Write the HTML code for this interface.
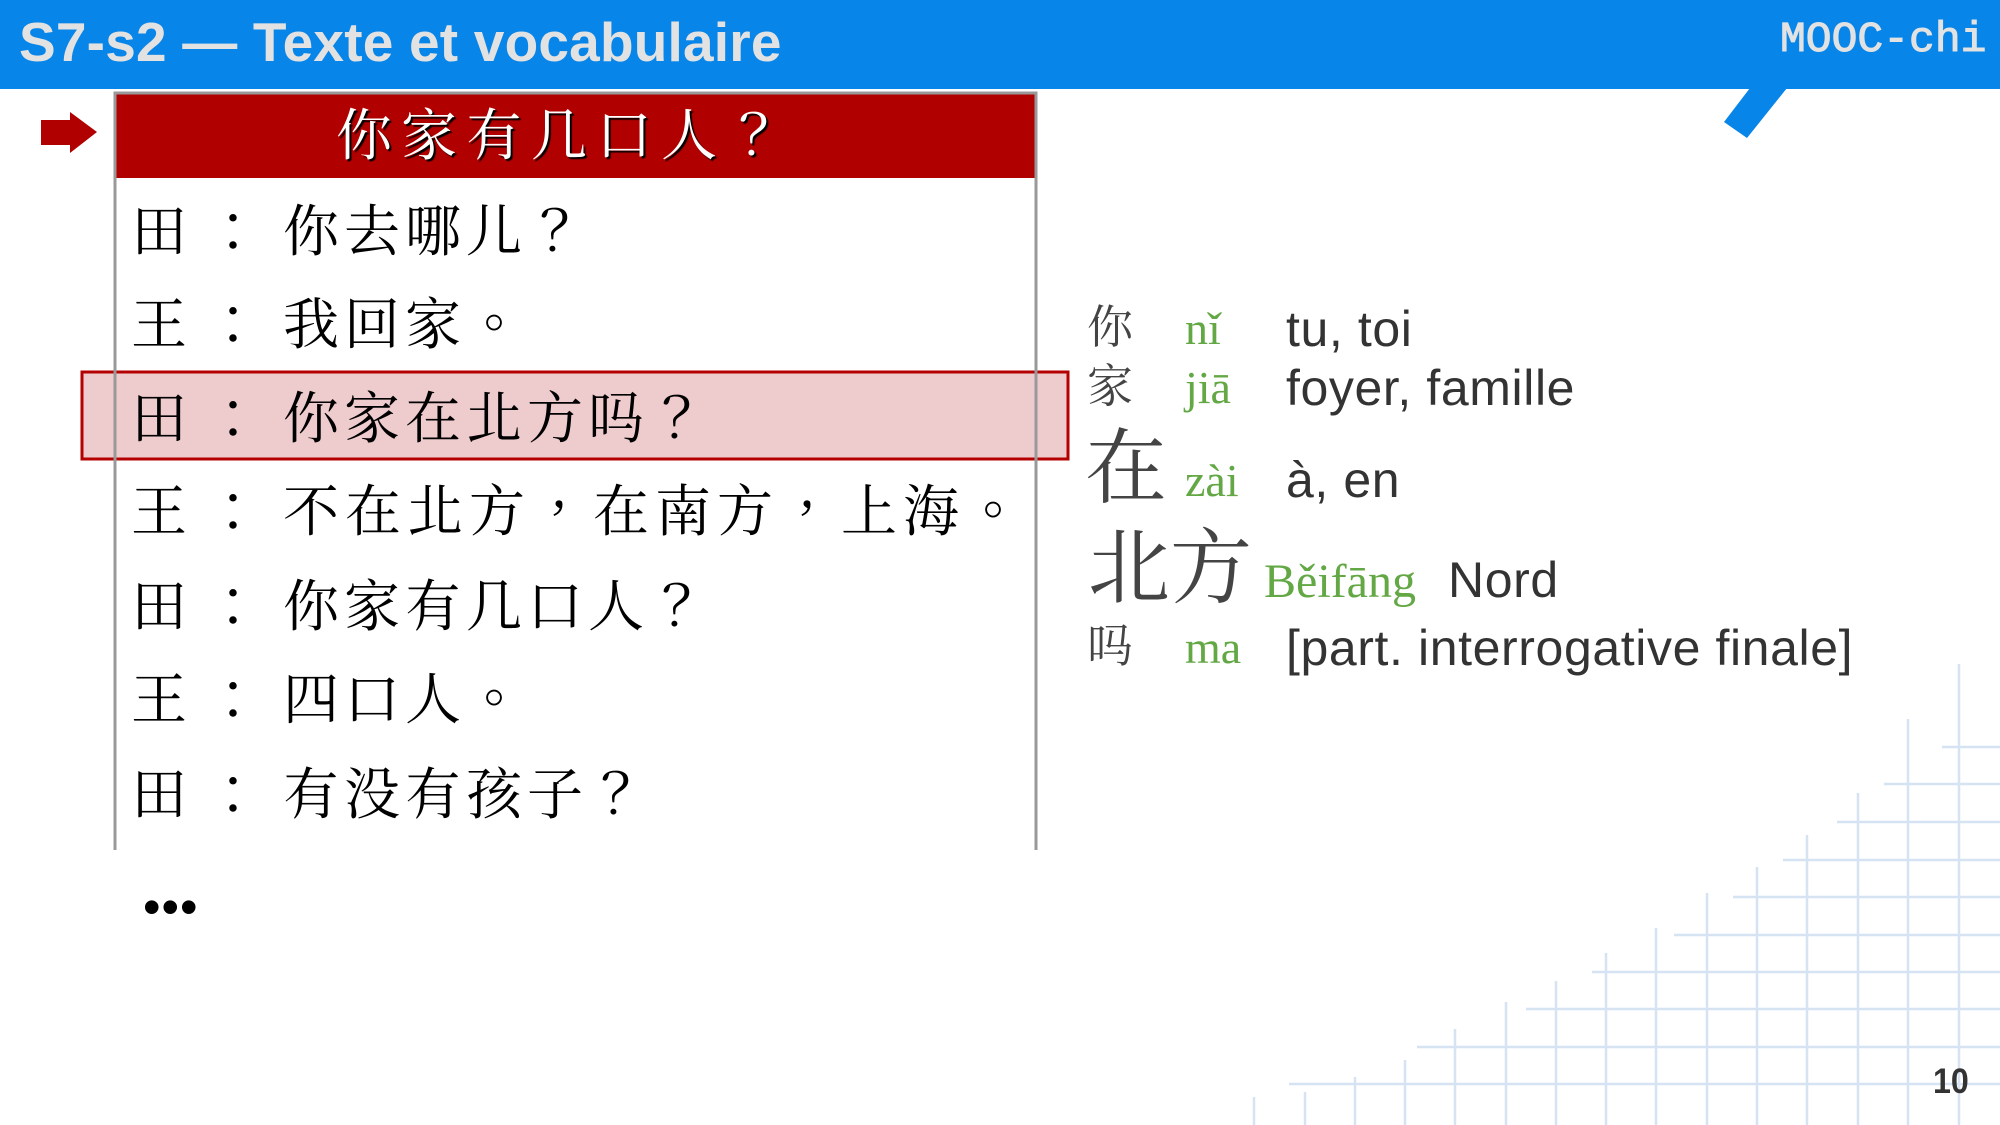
<!DOCTYPE html>
<html><head><meta charset="utf-8"><style>
*{margin:0;padding:0}
body{width:2000px;height:1125px;position:relative;overflow:hidden;background:#fff;font-family:"Liberation Sans",sans-serif}
.a{position:absolute;white-space:nowrap;line-height:1}
.cj{font-family:"Noto Serif CJK TC","Noto Serif CJK SC",serif;color:#000;font-size:56px}
.v{font-family:"Liberation Serif","Noto Serif CJK SC",serif;color:#444}
.py{font-family:"Liberation Serif",serif;color:#63a845;font-size:46px}
.m{color:#333;font-size:50px;letter-spacing:0.6px}
</style></head><body>
<svg class="a" style="left:0;top:0" width="2000" height="1125">
<g stroke="#d6e3f2" stroke-width="2.5">
<line x1="1254" y1="1097" x2="1254" y2="1125"/><line x1="1305" y1="1092" x2="1305" y2="1125"/><line x1="1355" y1="1077" x2="1355" y2="1125"/><line x1="1405" y1="1060" x2="1405" y2="1125"/><line x1="1455" y1="1029" x2="1455" y2="1125"/><line x1="1506" y1="1002" x2="1506" y2="1125"/><line x1="1556" y1="981" x2="1556" y2="1125"/><line x1="1606" y1="953" x2="1606" y2="1125"/><line x1="1656" y1="928" x2="1656" y2="1125"/><line x1="1707" y1="893" x2="1707" y2="1125"/><line x1="1757" y1="867" x2="1757" y2="1125"/><line x1="1807" y1="835" x2="1807" y2="1125"/><line x1="1858" y1="793" x2="1858" y2="1125"/><line x1="1908" y1="719" x2="1908" y2="1125"/><line x1="1959" y1="664" x2="1959" y2="1125"/>
<line x1="1942" y1="747" x2="2000" y2="747"/><line x1="1884" y1="784" x2="2000" y2="784"/><line x1="1837" y1="822" x2="2000" y2="822"/><line x1="1783" y1="860" x2="2000" y2="860"/><line x1="1733" y1="897" x2="2000" y2="897"/><line x1="1674" y1="935" x2="2000" y2="935"/><line x1="1592" y1="972" x2="2000" y2="972"/><line x1="1526" y1="1009" x2="2000" y2="1009"/><line x1="1417" y1="1047" x2="2000" y2="1047"/><line x1="1289" y1="1084" x2="2000" y2="1084"/>
</g>
<rect x="0" y="0" width="2000" height="89" fill="#0885e8"/>
<polygon points="1750,88 1787,88 1747,138 1724,122" fill="#0885e8"/>
<polygon points="41,120 70,120 70,112 97,132 70,153 70,145 41,145" fill="#b00000"/>
<rect x="82" y="372" width="986" height="87" fill="#eecbcc" stroke="#b40000" stroke-width="3"/>
<rect x="114" y="94" width="922" height="84" fill="#b00000"/>
<path d="M115 850 V93 H1036 V850" fill="none" stroke="#999" stroke-width="3"/>
</svg>
<div class="a" style="left:19px;top:15px;font-size:55px;font-weight:bold;color:#e2e2e2;letter-spacing:0.2px">S7-s2 — Texte et vocabulaire</div>
<div class="a" style="left:1780px;top:18px;font-size:43px;color:#e2e2e2;font-family:'Liberation Mono',monospace;-webkit-text-stroke:1px #e2e2e2">MOOC-chi</div>
<div class="a cj" style="left:336px;top:104px;color:#fff;letter-spacing:9px;text-shadow:2px 2px 1px #000">你家有几口人？</div>

<div class="a cj" style="left:131px;top:200px">田</div><div class="a cj" style="left:205px;top:200px">：</div><div class="a cj" style="left:283px;top:200px;letter-spacing:5px">你去哪儿？</div>
<div class="a cj" style="left:131px;top:293px">王</div><div class="a cj" style="left:205px;top:293px">：</div><div class="a cj" style="left:283px;top:293px;letter-spacing:5px">我回家。</div>
<div class="a cj" style="left:131px;top:387px">田</div><div class="a cj" style="left:205px;top:387px">：</div><div class="a cj" style="left:283px;top:387px;letter-spacing:5px">你家在北方吗？</div>
<div class="a cj" style="left:131px;top:480px">王</div><div class="a cj" style="left:205px;top:480px">：</div><div class="a cj" style="left:283px;top:480px;letter-spacing:6px">不在北方，在南方，上海。</div>
<div class="a cj" style="left:131px;top:575px">田</div><div class="a cj" style="left:205px;top:575px">：</div><div class="a cj" style="left:283px;top:575px;letter-spacing:5px">你家有几口人？</div>
<div class="a cj" style="left:131px;top:668px">王</div><div class="a cj" style="left:205px;top:668px">：</div><div class="a cj" style="left:283px;top:668px;letter-spacing:5px">四口人。</div>
<div class="a cj" style="left:131px;top:763px">田</div><div class="a cj" style="left:205px;top:763px">：</div><div class="a cj" style="left:283px;top:763px;letter-spacing:5px">有没有孩子？</div>

<div class="a" style="left:143px;top:882px;font-size:50px;color:#000;letter-spacing:1px">•••</div>
<div class="a v" style="left:1087px;top:305px;font-size:46px">你</div>
<div class="a py" style="left:1185px;top:306px">nǐ</div>
<div class="a m" style="left:1286px;top:304px">tu, toi</div>
<div class="a v" style="left:1087px;top:364px;font-size:46px">家</div>
<div class="a py" style="left:1185px;top:365px">jiā</div>
<div class="a m" style="left:1286px;top:363px">foyer, famille</div>
<div class="a v" style="left:1085px;top:428px;font-size:82px">在</div>
<div class="a py" style="left:1185px;top:458px">zài</div>
<div class="a m" style="left:1286px;top:455px">à, en</div>
<div class="a v" style="left:1088px;top:528px;font-size:82px">北方</div>
<div class="a py" style="left:1264px;top:558px;font-size:48px">Běifāng</div>
<div class="a m" style="left:1448px;top:555px">Nord</div>
<div class="a v" style="left:1087px;top:624px;font-size:46px">吗</div>
<div class="a py" style="left:1185px;top:625px">ma</div>
<div class="a m" style="left:1286px;top:623px">[part. interrogative finale]</div>
<div class="a" style="left:1933px;top:1064px;font-size:35px;font-weight:bold;color:#333;transform:scaleX(.92);transform-origin:left">10</div>
</body></html>
